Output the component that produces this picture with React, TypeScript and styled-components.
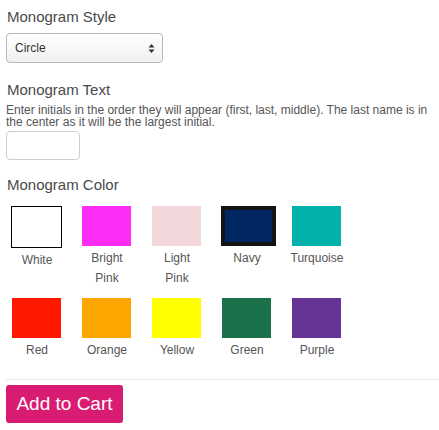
import React from "react";
import styled, { createGlobalStyle } from "styled-components";

const Global = createGlobalStyle`
  html, body { margin: 0; padding: 0; background: #fff; }
  body { font-family: "Liberation Sans", Arial, sans-serif; color: #555; }
`;

const Page = styled.div`
  padding: 8px 6px 0 6px;
  width: 439px;
  box-sizing: border-box;
`;

const Heading = styled.h3<{ $mt?: number }>`
  margin: ${(p) => p.$mt ?? 0}px 0 0 1px;
  font-size: 15px;
  line-height: 18px;
  font-weight: normal;
  color: #4a4a4a;
`;

const SelectBox = styled.div`
  margin-top: 7px;
  width: 157px;
  height: 30px;
  box-sizing: border-box;
  border: 1px solid #b9b9b9;
  border-radius: 4px;
  background: linear-gradient(#ffffff, #f1f1f1);
  display: flex;
  align-items: center;
  justify-content: space-between;
  padding: 0 7px 0 8px;
  font-size: 12px;
  color: #333;
`;

const Arrows = styled.svg`
  width: 7px;
  height: 11px;
`;

const Description = styled.p`
  margin: 5px 0 0 0;
  font-size: 12px;
  line-height: 12px;
  color: #555;
`;

const TextInput = styled.input`
  display: block;
  margin-top: 3px;
  width: 74px;
  height: 29px;
  box-sizing: border-box;
  border: 1px solid #cfcfcf;
  border-radius: 4px;
  outline: none;
`;

const Grid = styled.div<{ $mt: number }>`
  display: flex;
  margin: ${(p) => p.$mt}px 0 0 -4px;
`;

const Cell = styled.div`
  width: 70px;
  display: flex;
  flex-direction: column;
  align-items: flex-start;
`;

const Swatch = styled.div<{ $color: string; $variant?: "outline" | "thick" }>`
  width: ${(p) => (p.$variant === "thick" ? 47 : 49)}px;
  height: ${(p) => (p.$variant === "thick" ? 32 : 40)}px;
  margin-left: ${(p) => (p.$variant === "outline" ? 9 : p.$variant === "thick" ? 9 : 10)}px;
  background: ${(p) => p.$color};
  border: ${(p) =>
    p.$variant === "outline"
      ? "1px solid #000"
      : p.$variant === "thick"
      ? "4px solid #141414"
      : "none"};
`;

const Label = styled.div`
  width: 100%;
  margin-top: 2px;
  text-align: center;
  font-size: 12px;
  line-height: 20px;
  color: #555;
`;

const Divider = styled.hr`
  margin: 19px 0 0 0;
  border: none;
  border-top: 1px solid #e6e6e6;
  width: 433px;
`;

const CartButton = styled.button`
  margin-top: 5px;
  width: 117px;
  height: 38px;
  border: none;
  border-radius: 3px;
  background: #d81c72;
  color: #fff;
  font-family: "Liberation Sans", Arial, sans-serif;
  font-size: 19px;
  padding: 0;
`;

type Color = { name: string[]; color: string; variant?: "outline" | "thick" };

const row1: Color[] = [
  { name: ["White"], color: "#ffffff", variant: "outline" },
  { name: ["Bright", "Pink"], color: "#fd2cf4" },
  { name: ["Light", "Pink"], color: "#f2d8da" },
  { name: ["Navy"], color: "#002664", variant: "thick" },
  { name: ["Turquoise"], color: "#00b2a9" },
];

const row2: Color[] = [
  { name: ["Red"], color: "#fe1900" },
  { name: ["Orange"], color: "#fda500" },
  { name: ["Yellow"], color: "#ffff00" },
  { name: ["Green"], color: "#1a714a" },
  { name: ["Purple"], color: "#663497" },
];

const Row = ({ items, mt }: { items: Color[]; mt: number }) => (
  <Grid $mt={mt}>
    {items.map((c) => (
      <Cell key={c.color}>
        <Swatch $color={c.color} $variant={c.variant} />
        <Label>
          {c.name.map((n, i) => (
            <React.Fragment key={n}>
              {i > 0 && <br />}
              {n}
            </React.Fragment>
          ))}
        </Label>
      </Cell>
    ))}
  </Grid>
);

export default function App() {
  return (
    <>
      <Global />
      <Page>
        <Heading>Monogram Style</Heading>
        <SelectBox>
          <span>Circle</span>
          <Arrows viewBox="0 0 7 11">
            <path d="M3.5 1 L6.5 4.5 L0.5 4.5 Z" fill="#333" />
            <path d="M3.5 10 L6.5 6.5 L0.5 6.5 Z" fill="#333" />
          </Arrows>
        </SelectBox>
        <Heading $mt={18}>Monogram Text</Heading>
        <Description>
          Enter initials in the order they will appear (first, last, middle). The last name is in
          the center as it will be the largest initial.
        </Description>
        <TextInput />
        <Heading $mt={16}>Monogram Color</Heading>
        <Row items={row1} mt={12} />
        <Row items={row2} mt={10} />
        <Divider />
        <CartButton>Add to Cart</CartButton>
      </Page>
    </>
  );
}
